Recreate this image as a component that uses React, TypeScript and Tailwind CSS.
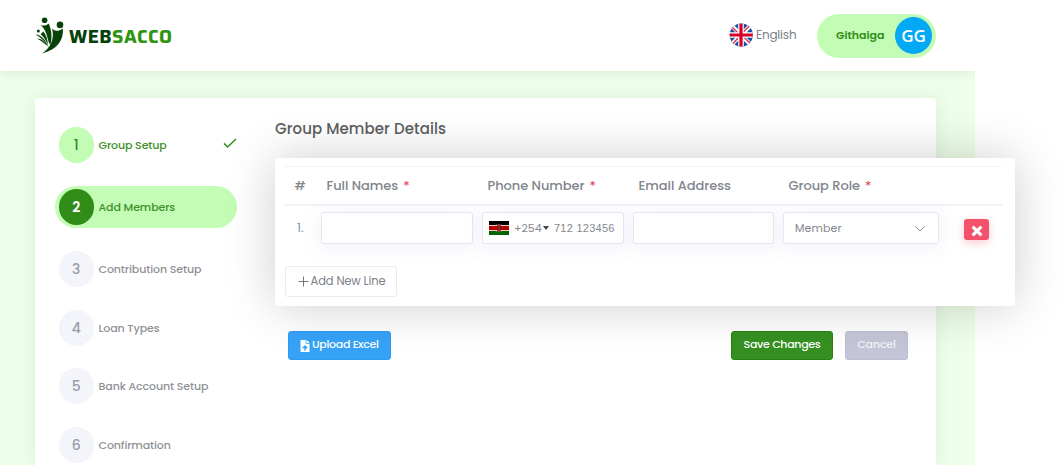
import React from "react";
import { FaFileUpload, FaTimes } from "react-icons/fa";

function LogoMark() {
  return (
    <svg width="29" height="38" viewBox="0 0 29 38" className="-mt-[2px] shrink-0" fill="#08420b">
      <circle cx="9.6" cy="4.2" r="2.8" />
      <circle cx="25" cy="8.9" r="3.3" />
      <circle cx="3.3" cy="15" r="1.5" />
      <path d="M5.4 9C8 10.2 11 9.6 13.6 7.4C16.2 12.5 17.6 20 15.4 29C11.8 25 13 14.5 5.4 9Z" />
      <path d="M17 12.6C20.4 16 24 15 28 12.4C28.6 25 21.5 33.4 7.2 37.4C15 32.5 20 23 17 12.6Z" />
      <path d="M5.6 18.2L8.4 15.4C11.4 19 12.6 24 13 29C11 24.5 8.6 20.5 5.6 18.2Z" />
      <path d="M.4 18.4C6 18.8 10 23.2 12.6 29C8.8 24.5 6 21.5 .4 18.4Z" />
      <path d="M2 22.4C6.5 22.4 10 25.5 13.8 30.8C9.5 27.8 7 24.8 2 22.4Z" />
    </svg>
  );
}

function UkFlag() {
  return (
    <svg width="24" height="24" viewBox="0 0 24 24" className="-mt-[2px] shrink-0">
      <clipPath id="round"><circle cx="12.3" cy="12" r="11.6" /></clipPath>
      <g clipPath="url(#round)">
        <rect width="24" height="24" fill="#1450a8" />
        <path d="M2 2L22 22M22 2L2 22" stroke="#fff" strokeWidth="4.2" />
        <path d="M2 3L11 12M22 21L12 11.4M21.3 2L12 11.4M2.7 22L11 12.9" stroke="#e2233b" strokeWidth="1.3" />
        <path d="M12 0V24M0 12H24" stroke="#fff" strokeWidth="5.6" />
        <path d="M12 0V24M0 12H24" stroke="#d80027" strokeWidth="3.2" />
      </g>
    </svg>
  );
}

function KenyaFlag() {
  return (
    <svg width="20" height="14" viewBox="0 0 20 14" className="shrink-0">
      <rect width="20" height="14" fill="#fff" />
      <rect width="20" height="4" fill="#000" />
      <rect y="4.8" width="20" height="4.4" fill="#b80000" />
      <rect y="10" width="20" height="4" fill="#006400" />
      <path d="M7.4 2.8L12.6 11.2M12.6 2.8L7.4 11.2" stroke="#bbb" strokeWidth=".5" />
      <ellipse cx="10" cy="7" rx="2.1" ry="4" fill="#b8322e" />
      <path d="M8.6 4.5Q9.5 7 8.6 9.5M11.4 4.5Q10.5 7 11.4 9.5" stroke="#3c1010" strokeWidth=".9" fill="none" />
    </svg>
  );
}

const steps = [
  { n: 1, label: "Group Setup", state: "done", row: "h-[62px]" },
  { n: 2, label: "Add Members", state: "active", row: "h-[62px]" },
  { n: 3, label: "Contribution Setup", state: "todo", row: "h-[62px]" },
  { n: 4, label: "Loan Types", state: "todo", row: "h-[56px]" },
  { n: 5, label: "Bank Account Setup", state: "todo", row: "h-[60px]" },
  { n: 6, label: "Confirmation", state: "todo", row: "h-[58px]" },
];

function Step({ step }: { step: (typeof steps)[number] }) {
  const active = step.state === "active";
  const done = step.state === "done";
  const circle = active ? "bg-[#318d18] text-white" : done ? "bg-[#c3fcb5] text-[#318d18]" : "bg-[#f3f5fa] text-[#9a9ca6]";
  const label = active || done ? "text-[#3d9129]" : "text-[#8f9196]";
  return (
    <li className={`flex items-center ${step.row}`}>
      <div className={`flex h-[42.5px] w-[182px] items-center rounded-full pl-[3.5px] ${active ? "bg-[#c3fcb5]" : ""}`}>
        <span className={`flex size-[35.5px] shrink-0 items-center justify-center rounded-full pt-px text-[14px] ${active ? "font-semibold" : "font-medium"} ${circle}`}>{step.n}</span>
        <span className={`ml-[4.5px] whitespace-nowrap text-[11px] font-medium tracking-[-0.1px] ${label}`}>{step.label}</span>
        {done && (
          <svg width="14" height="11" viewBox="0 0 14 11" className="ml-auto -mt-[3px]" fill="none" stroke="#318d18" strokeWidth="1.5">
            <path d="M1 5.4L4.6 9L13 1" />
          </svg>
        )}
      </div>
    </li>
  );
}

function Heading({ children, required, className }: { children: string; required?: boolean; className: string }) {
  return (
    <div className={`shrink-0 whitespace-nowrap pl-[5.5px] ${className}`}>
      {children}
      {required && <span className="ml-[5px] font-normal text-[#e8384f]">*</span>}
    </div>
  );
}

const field = "flex h-8 shrink-0 items-center rounded-[3px] border border-[#e6e6f2] bg-white shadow-[0_3px_20px_rgba(113,106,202,0.11)]";

export default function App() {
  return (
    <div className="h-[465px] w-[1062px] overflow-hidden bg-white font-['Poppins','Inter',sans-serif]">
      <div className="flex h-[465px] w-[975px] flex-col bg-[#eeffe9]">
        <header className="relative flex h-[71px] shrink-0 items-center bg-white pl-[35px] pr-[39px] shadow-[0_1px_10px_rgba(82,90,80,0.13)] [clip-path:inset(0_0_-20px_0)]">
          <div className="flex items-center">
            <LogoMark />
            <div className="ml-[5px] mt-[4px] whitespace-nowrap font-['Saira','Changa','Exo_2','Inter',sans-serif] text-[18.5px] font-bold leading-none tracking-[0.4px] text-[#06420b]">
              WEB<span className="text-[#2f9412]">SACCO</span>
            </div>
          </div>
          <div className="ml-auto flex items-center">
            <UkFlag />
            <span className="-mt-px ml-[3px] w-[61px] text-[12px] tracking-[-0.2px] text-[#7c8088]">English</span>
            <div className="flex h-[44px] w-[119px] items-center justify-between rounded-full bg-[#c3fcb5] pl-[19px] pr-[4px]">
              <span className="-mt-px text-[11px] font-semibold text-[#318d18]">Githaiga</span>
              <span className="flex size-[37px] items-center justify-center rounded-full bg-[#03a9f4] font-['Open_Sans'] text-[17px] font-semibold text-white">GG</span>
            </div>
          </div>
        </header>

        <div className="ml-[35px] mt-[27px] flex h-[367px] w-[901px] shrink-0 rounded-t-[4px] bg-white shadow-[0_0_16px_rgba(82,90,80,0.1)]">
          <ul className="w-[240px] shrink-0 pl-5 pt-4">
            {steps.map((s) => <Step key={s.n} step={s} />)}
          </ul>

          <main className="w-[740px] shrink-0">
            <h1 className="h-[60px] pt-5 text-[15px] font-medium leading-[22px] tracking-[0.08px] text-[#5c5e62]">Group Member Details</h1>
            <section className="relative h-[148px] bg-white px-[10px] pt-2 shadow-[0_0_50px_rgba(0,0,0,0.2)]">
              <div className="flex h-[40px] w-[717px] items-center border-b-2 border-t border-b-[#f1f1f8] border-t-[#f2f2f7] text-[13px] font-medium tracking-[-0.04px] text-[#81858d]">
                <div className="w-[31px] shrink-0 pl-[9.5px]">#</div>
                <Heading required className="ml-[5px] w-[161px]">Full Names</Heading>
                <Heading required className="w-[151px]">Phone Number</Heading>
                <Heading className="w-[150px]">Email Address</Heading>
                <Heading required className="w-[156px]">Group Role</Heading>
              </div>
              <div className="flex h-[44px] items-center text-[11px] text-[#85888e]">
                <span className="w-9 shrink-0 pl-[12px] pt-px text-[12.5px] text-[#7f94a8]">1.</span>
                <div className={`${field} w-[152px]`} />
                <div className={`${field} ml-[9px] w-[142px] pl-[6px]`}>
                  <KenyaFlag />
                  <span className="ml-[5px] w-[29px] pt-px text-[11px]">+254</span>
                  <svg width="6" height="4" viewBox="0 0 6 4"><path d="M0 0H6L3 4Z" fill="#444" /></svg>
                  <span className="ml-[5px] whitespace-nowrap pt-px font-['Liberation_Sans'] text-[11px] tracking-[0.25px]">712 123456</span>
                </div>
                <div className={`${field} ml-[9px] w-[141px]`} />
                <div className={`${field} ml-[9px] w-[156px] justify-between pl-[11px] pr-[13px]`}>
                  <span className="tracking-[0.1px]">Member</span>
                  <svg width="10" height="6" viewBox="0 0 10 6" className="mt-[2px]" fill="none" stroke="#8a8d86" strokeWidth="1"><path d="M.5 .5L5 5L9.5 .5" /></svg>
                </div>
                <button className="ml-[25px] mt-[3px] flex h-[21px] w-[25px] shrink-0 items-center justify-center rounded-[3px] bg-[#f4516c] pt-[2px] text-[14px] text-white shadow-[0_3px_8px_rgba(244,81,108,0.3)]">
                  <FaTimes stroke="white" strokeWidth="30" />
                </button>
              </div>
              <button className="mt-[16px] flex h-[31px] w-[112px] items-center rounded-[3px] border border-[#ebebf2] pl-[12px] text-[11.5px] text-[#7c8088]">
                <svg width="11" height="11" viewBox="0 0 11 11" stroke="#74777c" className="mr-[1.5px] shrink-0"><path d="M5.5 .5V10.5M.5 5.5H10.5" /></svg>
                <span className="mt-px whitespace-nowrap tracking-[-0.12px]">Add New Line</span>
              </button>
            </section>

            <div className="flex pl-[13px] pt-[25px] text-[11px] font-medium">
              <button className="flex h-[29px] w-[103px] items-center rounded-[3px] border border-[#2f9cf4] bg-[#36a3f7] pb-[2px] pl-[11px] text-white">
                <FaFileUpload className="mr-[2px] mt-[3px] h-[12px] w-[10px] shrink-0" />
                <span className="whitespace-nowrap tracking-[-0.3px]">Upload Excel</span>
              </button>
              <button className="ml-[340px] h-[29px] w-[102px] whitespace-nowrap rounded-[3px] border border-[#288410] bg-[#359021] pb-[2px] tracking-[-0.3px] text-white">Save Changes</button>
              <button className="ml-[12px] h-[29px] w-[63px] rounded-[3px] border border-[#bebed2] bg-[#c4c5d6] pb-[2px] tracking-[-0.15px] text-[#f3f3fa]">Cancel</button>
            </div>
          </main>
        </div>
      </div>
    </div>
  );
}
